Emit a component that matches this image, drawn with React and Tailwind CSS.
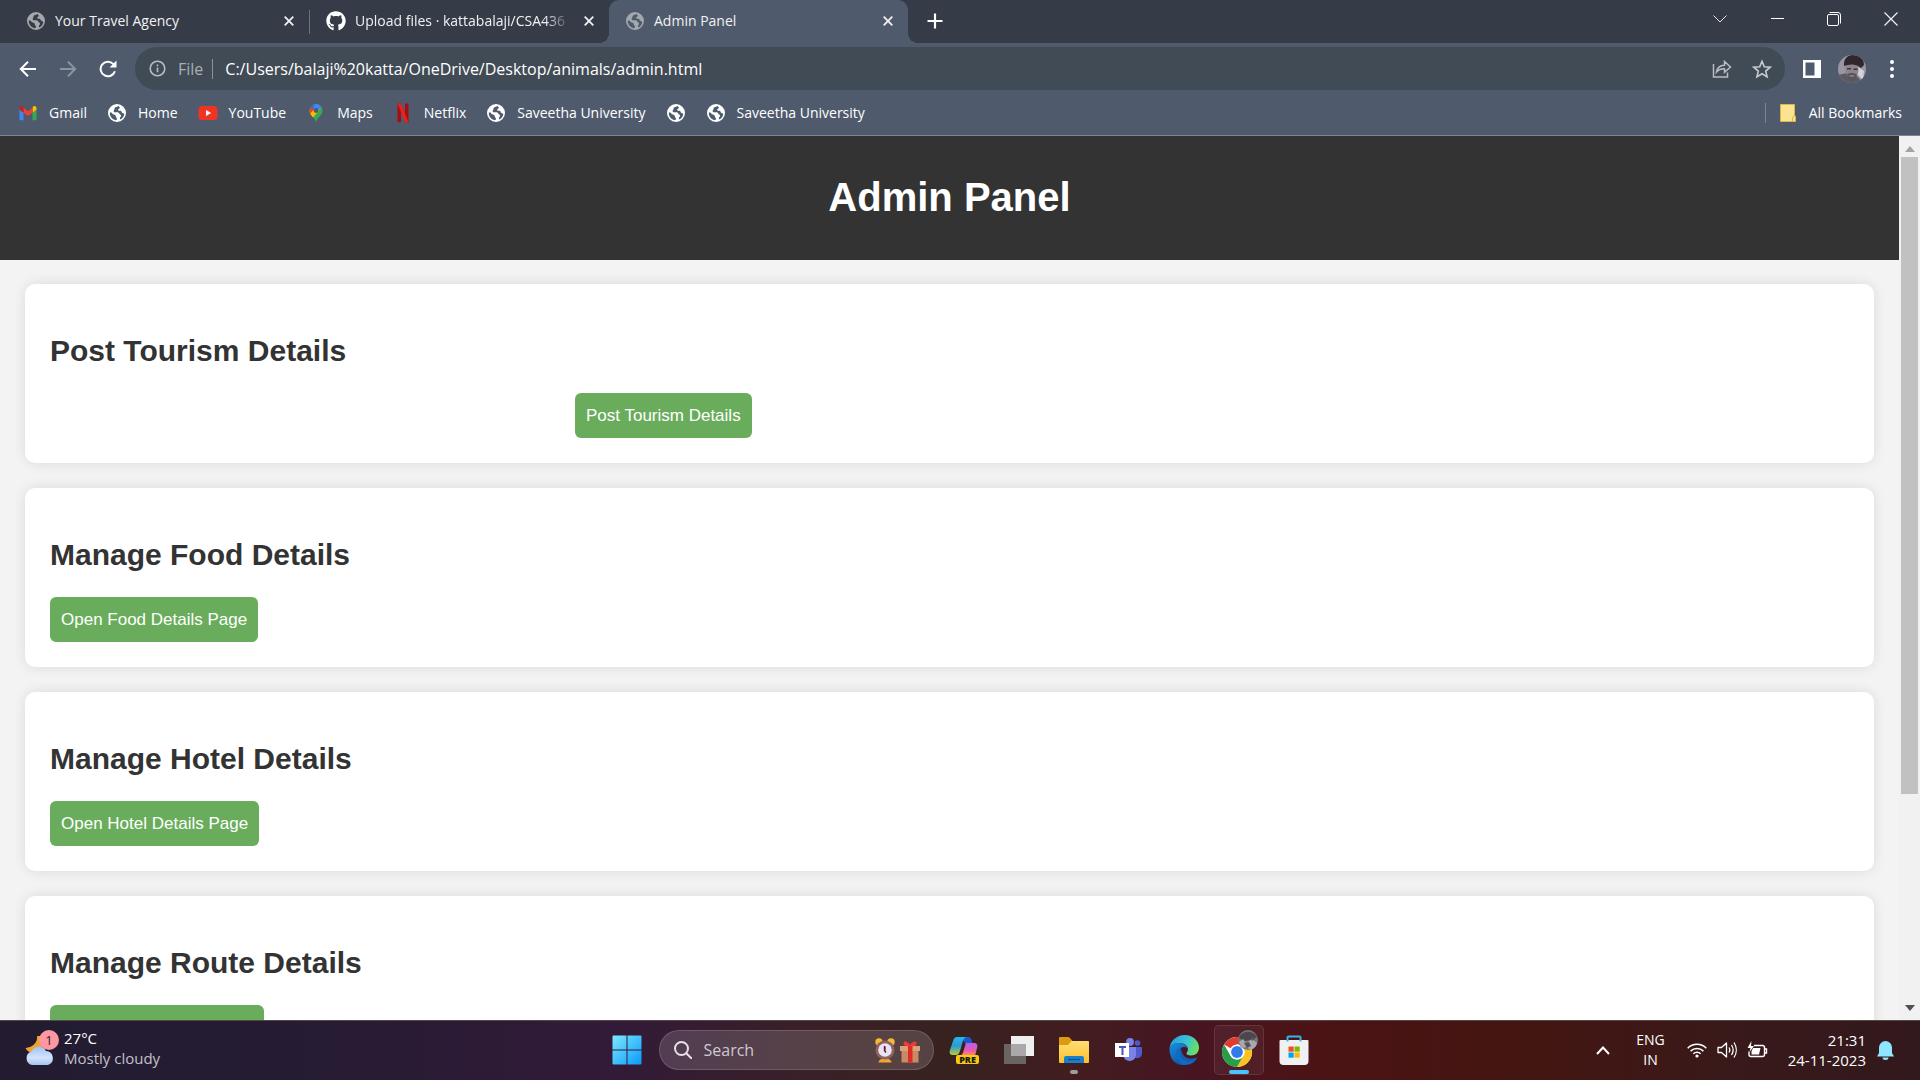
import React from "react";
import { FaGithub } from "react-icons/fa";

const uiFont = "font-['Open_Sans','Noto_Sans',sans-serif]";

function Globe({ className }) {
  return (
    <svg viewBox="0 0 20 20" className={className} fill="currentColor" aria-hidden="true">
      <path
        fillRule="evenodd"
        d="M10 1a9 9 0 1 1 0 18 9 9 0 0 1 0-18zM2.800 9.500c-.2 4 2.400 7 5.900 7.700.8-.2 1.300-.8 1.300-1.500-.2-1-1.200-1.300-1.200-2.400 0-.9-.6-1.200-1.300-1.500L5.600 11 4.500 9.500zM11.800 2.900c-1 .2-1.400.9-2.600 1.100-1.200.3-1.700 1-1.700 2 0 .8-.9 1.200-.9 2 0 .9.8 1.200 1.800 1.200h2.200c1.100 0 1.500.8 1.800 1.600.4.900 1.600.7 1.700 1.700.1 1-.9 1.500-1.200 2.600-.1.700.1 1.200.6 1.300 2-.9 3.500-3 3.800-5.300-.6-.9-1.700-.8-2.400-1.500-.6-.7-.2-1.500-1.200-1.800-1-.2-1.900.2-2.400-.6-.5-.9.700-1.400 1.300-1.900.5-.6-.2-1.600-.8-2.400z"
      />
    </svg>
  );
}

function CloseIcon() {
  return (
    <svg viewBox="0 0 10 10" className="size-[10px]" fill="none" stroke="currentColor" strokeWidth="1.8">
      <path d="M0.7 0.7l8.6 8.6M9.3 0.7L0.7 9.3" />
    </svg>
  );
}

function GmailIcon() {
  return (
    <svg viewBox="0 0 20 20" className="size-5">
      <path d="M1.5 6v10.2c0 .6.4 1 1 1h3V9.5z" fill="#4285f4" />
      <path d="M18.5 6v10.2c0 .6-.4 1-1 1h-3V9.5z" fill="#34a853" />
      <path d="M14.500 4.800v4.900l4-3V5.100c0-1.800-1.900-2.700-3.200-1.700z" fill="#fbbc04" />
      <path d="M5.500 9.700V4.800l4.500 3.400 4.500-3.400v4.900L10 13.100z" fill="#ea4335" />
      <path d="M1.500 5.100v1.600l4 3V4.800l-.8-1.400C3.400 2.400 1.500 3.300 1.500 5.100z" fill="#c5221f" />
    </svg>
  );
}

function YouTubeIcon() {
  return (
    <svg viewBox="0 0 20 20" className="size-5">
      <rect x="0.500" y="3" width="19" height="14" rx="3.500" fill="#f03424" />
      <path d="M8 7l5.200 3L8 13z" fill="#fff" />
    </svg>
  );
}

function MapsIcon() {
  return (
    <svg viewBox="0 0 20 20" className="size-5">
      <defs>
        <clipPath id="pin">
          <path d="M10 1a6.500 6.500 0 0 0-6.500 6.500c0 5 5 6.500 6.500 11.500 1.500-5 6.500-6.500 6.500-11.500A6.500 6.500 0 0 0 10 1z" />
        </clipPath>
      </defs>
      <g clipPath="url(#pin)">
        <path d="M0 0h20v20H0z" fill="#34a853" />
        <path d="M-2 14L8 2l6 4-8 10z" fill="#fbbc04" />
        <path d="M0 0h8l2 4-6 7H0z" fill="#ea4335" />
        <path d="M6 0h14v2L9 9z" fill="#4285f4" />
        <path d="M4 1h5L6 7z" fill="#1a73e8" />
      </g>
      <circle cx="10" cy="7.500" r="2.400" fill="#4f5b6d" />
    </svg>
  );
}

function NetflixIcon() {
  return (
    <svg viewBox="0 0 20 20" className="size-5">
      <path d="M4.500 0.500h3.500v18.500l-3.500 .500zM12 0.500h3.500v19l-3.500-.500z" fill="#a50d12" />
      <path d="M4.500 0.500H8l7.500 19-3.500-.500z" fill="#e8211f" />
    </svg>
  );
}

function Tab({ icon, title, active, fade }) {
  return (
    <div
      role="tab"
      aria-selected={active}
      className={
        active
          ? "relative flex h-full w-[299px] items-center rounded-t-[10px] bg-[#4f5b6d] pr-[10px] pb-0.5 pl-4"
          : "relative flex h-full w-[299px] items-center pr-[10px] pb-0.5 pl-4"
      }
    >
      {active && (
        <>
          <span className="absolute bottom-0 -left-[10px] size-[10px] bg-[radial-gradient(circle_at_0_0,#353b47_10px,#4f5b6d_10px)]" />
          <span className="absolute bottom-0 -right-[10px] size-[10px] bg-[radial-gradient(circle_at_100%_0,#353b47_10px,#4f5b6d_10px)]" />
        </>
      )}
      {icon}
      <span
        className={
          fade
            ? "ml-[9px] w-[216px] overflow-hidden whitespace-nowrap [mask-image:linear-gradient(to_right,#000_190px,transparent)]"
            : "ml-[9px] w-[216px] overflow-hidden whitespace-nowrap"
        }
      >
        {title}
      </span>
      <button aria-label={"Close " + title} className="ml-auto flex size-5 items-center justify-center">
        <CloseIcon />
      </button>
    </div>
  );
}

function TabStrip() {
  return (
    <div className="flex h-[43px] shrink-0 items-center bg-[#353b47] text-sm text-[#f0f1f3]">
      <div role="tablist" className="flex h-full items-center pl-[10px]">
        <Tab icon={<Globe className="size-5 text-[#a3a8ab]" />} title="Your Travel Agency" />
        <span className="h-6 w-px bg-[#6b7280]" />
        <Tab icon={<FaGithub className="size-5 text-white" />} title="Upload files · kattabalaji/CSA436" fade />
        <Tab icon={<Globe className="size-5 text-[#a3a8ab]" />} title="Admin Panel" active />
      </div>
      <button aria-label="New tab" className="mb-0.5 ml-[18px] flex size-[18px] items-center justify-center">
        <svg viewBox="0 0 16 16" className="size-4" stroke="#fff" strokeWidth="2.200">
          <path d="M8 0.500v15M0.500 8h15" />
        </svg>
      </button>
      <div className="ml-auto flex h-full items-center gap-[28px] pr-[15px] pb-[6px]">
        <button aria-label="Search tabs" className="flex w-[30px] justify-center">
          <svg viewBox="0 0 14 8" className="h-2 w-[14px]" fill="none" stroke="#dfe1e5">
            <path d="M0.500 0.500L7 7l6.500-6.500" />
          </svg>
        </button>
        <button aria-label="Minimize" className="flex w-[28px] justify-center">
          <span className="h-px w-[13px] bg-white" />
        </button>
        <button aria-label="Restore" className="flex w-[30px] justify-center">
          <svg viewBox="0 0 14 14" className="size-[14px]" fill="none" stroke="#fff">
            <rect x="0.500" y="2.500" width="11" height="11" rx="1.500" />
            <path d="M2.500 0.500h8.500a2.500 2.500 0 0 1 2.500 2.500v8.500" />
          </svg>
        </button>
        <button aria-label="Close window" className="flex w-[28px] justify-center">
          <svg viewBox="0 0 14 14" className="size-[14px]" fill="none" stroke="#f0f1f3" strokeWidth="1.200">
            <path d="M0.500 0.500l13 13M13.500 0.500l-13 13" />
          </svg>
        </button>
      </div>
    </div>
  );
}

function Toolbar() {
  return (
    <div className="flex h-[53px] shrink-0 items-center bg-[#4f5b6d] pt-px pr-[19px] pb-[3px] pl-[18px]">
      <button aria-label="Back" className="flex size-5 items-center justify-center">
        <svg viewBox="0 0 18 18" className="size-[18px]" fill="none" stroke="#fff" strokeWidth="2">
          <path d="M17 9H2.500M9 1.800L1.800 9 9 16.200" />
        </svg>
      </button>
      <button aria-label="Forward" className="ml-5 flex size-5 items-center justify-center">
        <svg viewBox="0 0 18 18" className="size-[18px]" fill="none" stroke="#8b939e" strokeWidth="2">
          <path d="M1 9h14.500M9 1.800L16.200 9 9 16.200" />
        </svg>
      </button>
      <button aria-label="Reload" className="ml-5 flex size-5 items-center justify-center">
        <svg viewBox="0 0 18 18" className="size-[18px]" fill="none" stroke="#fff" strokeWidth="2">
          <path d="M15.900 11.200A7.300 7.300 0 1 1 14.200 3.900L16 5.700" />
          <path d="M17.500 0.500v7h-7z" fill="#fff" stroke="none" />
        </svg>
      </button>
      <div className="ml-[17px] flex h-[43px] flex-1 items-center rounded-full bg-[#414b56] pr-[13px] pl-[14px]">
        <svg viewBox="0 0 17 17" className="size-[17px]" fill="none" stroke="#b9bdc2" strokeWidth="1.600">
          <circle cx="8.500" cy="8.500" r="7.300" />
          <path d="M8.500 7.500v4.700M8.500 4.500v1.700" />
        </svg>
        <span className="ml-3 text-base text-[#a9afb5]">File</span>
        <span className="ml-[9px] h-5 w-px bg-[#8a9198]" />
        <input
          aria-label="Address"
          defaultValue="C:/Users/balaji%20katta/OneDrive/Desktop/animals/admin.html"
          className="ml-3 flex-1 bg-transparent text-base text-white outline-none"
        />
        <button aria-label="Share" className="flex size-5 items-center justify-center">
          <svg viewBox="0 0 20 20" className="size-5" fill="none" stroke="#b9bdc2" strokeWidth="1.500">
            <path d="M1.500 5v13h14v-4.500" />
            <path d="M4.500 13c.6-4.300 3.600-6.600 8-6.800V2.500l6 5.500-6 5.400v-3.600c-3.500 0-6 .8-8 3.200z" />
          </svg>
        </button>
        <button aria-label="Bookmark this page" className="ml-5 flex size-5 items-center justify-center">
          <svg viewBox="0 0 20 20" className="size-5" fill="none" stroke="#c9cccf" strokeWidth="1.600">
            <path d="M10 2.300l2.300 5.400 5.900.5-4.500 3.900 1.400 5.800L10 14.800l-5.100 3.100 1.400-5.800-4.500-3.900 5.900-.5z" />
          </svg>
        </button>
      </div>
      <button aria-label="Side panel" className="ml-[17px] flex size-5 items-center justify-center">
        <svg viewBox="0 0 18 18" className="size-[18px]">
          <path fillRule="evenodd" fill="#fff" d="M0 0h18v18H0zM2.500 2.500v13H11.500v-13z" />
        </svg>
      </button>
      <button aria-label="Profile" className="ml-4">
        <svg viewBox="0 0 28 28" className="size-7">
          <clipPath id="avatar"><circle cx="14" cy="14" r="14" /></clipPath>
          <g clipPath="url(#avatar)">
            <path d="M0 0h28v28H0z" fill="#9a95a3" />
            <path d="M0 20l9-2 9 2 7 8H0z" fill="#5c5b64" />
            <path d="M20 12l6 4-1 9-6-6z" fill="#d5d2dc" />
            <ellipse cx="14" cy="15" rx="6.500" ry="9" fill="#8b848b" />
            <path d="M6 11C5.500 4 9 0 15 0c6 0 11 3 11 10l-3 3-3-2C16 9 11 9 6 11z" fill="#2f272c" />
            <path d="M9 13h4v1.500H9zM15.500 13.500h4V15h-4z" fill="#3d363b" />
            <path d="M9 19.500c3-2 7.500-2 10 .5l-2 4.500-4 2-3-3z" fill="#5b545a" />
            <path d="M11.500 20.500h4.500v1h-4.500z" fill="#a59da4" />
          </g>
        </svg>
      </button>
      <button aria-label="Menu" className="ml-[17px] flex w-[18px] justify-center">
        <svg viewBox="0 0 4 18" className="h-[18px] w-1" fill="#fff">
          <circle cx="2" cy="2" r="2" />
          <circle cx="2" cy="9" r="2" />
          <circle cx="2" cy="16" r="2" />
        </svg>
      </button>
    </div>
  );
}

const bookmarks = [
  { label: "Gmail", icon: <GmailIcon /> },
  { label: "Home", icon: <Globe className="size-5" /> },
  { label: "YouTube", icon: <YouTubeIcon /> },
  { label: "Maps", icon: <MapsIcon /> },
  { label: "Netflix", icon: <NetflixIcon /> },
  { label: "Saveetha University", icon: <Globe className="size-5" /> },
  { label: "", icon: <Globe className="size-5" /> },
  { label: "Saveetha University", icon: <Globe className="size-5" /> },
];

function BookmarksBar() {
  return (
    <nav className="flex h-10 shrink-0 items-center border-b border-[#7b8592] bg-[#4f5b6d] pr-[18px] pb-[6px] pl-[18px] text-sm text-white">
      <div className="flex items-center gap-5">
        {bookmarks.map((b, i) => (
          <a key={i} href="#" aria-label={b.label || "Bookmark"} className="flex items-center gap-[11px]">
            {b.icon}
            {b.label && <span>{b.label}</span>}
          </a>
        ))}
      </div>
      <span className="ml-auto h-5 w-px bg-[#7b8592]" />
      <a href="#" className="ml-[14px] flex items-center gap-[13px]">
        <svg viewBox="0 0 16 18" className="h-[18px] w-4">
          <path d="M0.500 0.500h14v11.500h1v5.500h-15z" fill="#fbe491" stroke="#d9b84a" />
          <path d="M12.500 17.500v-4l2-1.500" fill="none" stroke="#d9b84a" />
        </svg>
        <span>All Bookmarks</span>
      </a>
    </nav>
  );
}

function Card({ title, action, label, actionClass }) {
  return (
    <section className="rounded-[10px] bg-white p-[25px] shadow-[0_0_13px_rgba(0,0,0,0.1)]">
      <h2 className="my-[25px] text-[30px] leading-[34px] font-bold text-[#333]">{title}</h2>
      <button
        aria-label={label}
        className={"block h-[45px] rounded-[6px] bg-[#69ad5c] px-[11px] text-[17px] text-white " + actionClass}
      >
        {action}
      </button>
    </section>
  );
}

function AdminPage() {
  return (
    <div className="flex min-h-0 flex-1">
      <main className="flex-1 overflow-hidden bg-[#f3f3f3] font-['Liberation_Sans',Arial,sans-serif]">
        <header className="bg-[#333] px-3 pt-[38px] pb-[40px] text-center">
          <h1 className="text-[40px] leading-[46px] font-bold text-white">Admin Panel</h1>
        </header>
        <div className="flex flex-col gap-[25px] px-[25px] py-6">
          <Card title="Post Tourism Details" action="Post Tourism Details" actionClass="ml-[525px]" />
          <Card title="Manage Food Details" action="Open Food Details Page" actionClass="" />
          <Card title="Manage Hotel Details" action="Open Hotel Details Page" actionClass="" />
          <Card title="Manage Route Details" label="Manage Route Details" actionClass="w-[214px]" />
        </div>
      </main>
      <div className="flex w-[21px] shrink-0 flex-col items-center bg-[#f1f1f1]" aria-hidden="true">
        <span className="flex h-[21px] items-center pt-1">
          <svg viewBox="0 0 10 6" className="h-[6px] w-[10px]" fill="#a3a3a3"><path d="M0 6l5-6 5 6z" /></svg>
        </span>
        <span className="h-[637px] w-[17px] bg-[#c1c1c1]" />
        <span className="mt-auto flex h-6 items-center">
          <svg viewBox="0 0 10 6" className="h-[6px] w-[10px]" fill="#505050"><path d="M0 0l5 6 5-6z" /></svg>
        </span>
      </div>
    </div>
  );
}

function WeatherIcon() {
  return (
    <svg viewBox="0 0 36 38" className="h-[38px] w-9">
      <defs>
        <linearGradient id="cloud" x1="0" y1="0" x2="0" y2="1">
          <stop offset="0" stopColor="#9cc3f5" />
          <stop offset="0.600" stopColor="#d4e3fb" />
          <stop offset="1" stopColor="#a5c1f0" />
        </linearGradient>
      </defs>
      <path d="M13 7c1 6-4 11.500-11.500 12 2 4 6 6 12 4l6-8-3-8z" fill="#f2a32c" />
      <path d="M8 36a7 7 0 0 1-.5-13.500 8 8 0 0 1 14.500-.5A7.200 7.200 0 0 1 24 36z" fill="url(#cloud)" />
      <circle cx="25" cy="11" r="10" fill="#fd98a3" />
      <text x="25" y="16" textAnchor="middle" fontSize="13" fill="#2b2030" fontFamily="Open Sans">1</text>
    </svg>
  );
}

function StartIcon() {
  return (
    <svg viewBox="0 0 30 30" className="size-[30px]">
      <defs>
        <linearGradient id="win" x1="0" y1="0" x2="1" y2="1">
          <stop offset="0" stopColor="#7beafe" />
          <stop offset="1" stopColor="#0a98fb" />
        </linearGradient>
      </defs>
      <path d="M1.500 0.500H14.500V14.500H0.500V1.500q0-1 1-1zM15.500 0.500H28.500q1 0 1 1V14.500H15.500zM0.500 15.500H14.500V29.500H1.500q-1 0-1-1zM15.500 15.500H29.500V28.500q0 1-1 1H15.500z" fill="url(#win)" />
    </svg>
  );
}

function ClockIcon() {
  return (
    <svg viewBox="0 0 20 25" className="h-[25px] w-5">
      <path d="M3.500 24.500c0-2.500 3-4 6.500-4s6.500 1.500 6.500 4z" fill="#f3a42b" />
      <circle cx="4" cy="4" r="3.700" fill="#f7b932" />
      <circle cx="16" cy="4" r="3.700" fill="#f7b932" />
      <circle cx="10" cy="12" r="9.500" fill="#8d6260" />
      <circle cx="10" cy="12" r="6.800" fill="#e9e3f4" />
      <path d="M9.500 8v4.500l1.500 2" stroke="#35304a" strokeWidth="1.400" fill="none" />
      <path d="M10.500 8.500v4" stroke="#e2354a" strokeWidth="1" />
    </svg>
  );
}

function GiftIcon() {
  return (
    <svg viewBox="0 0 20 22" className="h-[22px] w-5">
      <path d="M1.500 9h17v12.500h-17z" fill="#c98b65" />
      <path d="M0 5h20v5H0z" fill="#dda179" />
      <path d="M8 5h4.500v16.500H8z" fill="#e02a2a" />
      <path d="M10 5C6 6 3 4.500 3.500 2S8.500.500 10 4c1.500-3.500 6.500-4.500 6.500-2S14 6 10 5z" fill="#ef3a35" />
    </svg>
  );
}

function CopilotIcon() {
  return (
    <svg viewBox="0 0 30 30" className="size-[30px]">
      <defs>
        <linearGradient id="copA" x1="0" y1="0" x2="0" y2="1">
          <stop offset="0" stopColor="#24b6f0" />
          <stop offset="0.500" stopColor="#2f9bd3" />
          <stop offset="1" stopColor="#b5cf38" />
        </linearGradient>
        <linearGradient id="copB" x1="0" y1="0" x2="0" y2="1">
          <stop offset="0" stopColor="#b45cf0" />
          <stop offset="0.600" stopColor="#ec5ba8" />
          <stop offset="1" stopColor="#f59a5b" />
        </linearGradient>
      </defs>
      <path d="M12 2h7c2 0 3 1 3.500 3l1.500 5h-7z" fill="#1d58c9" />
      <path d="M8 2h9c-2 1-3 3-4 7l-2 7c-1 2.500-2 4-4 4H4c-3 0-4-2-3-5l3-9c.8-2.500 2-4 4-4z" fill="url(#copA)" />
      <path d="M17 8h8c3 0 4 2 3 5l-2 8H11c2-1 3-3 3.500-5z" fill="url(#copB)" />
      <rect x="7" y="20" width="23" height="9" rx="2" fill="#fdc90c" />
      <text x="18.500" y="28" textAnchor="middle" fontSize="9" fontWeight="800" fill="#1b1b1b" fontFamily="Open Sans">PRE</text>
    </svg>
  );
}

function TaskViewIcon() {
  return (
    <svg viewBox="0 0 30 28" className="h-7 w-[30px]">
      <path d="M7 0h23v20H7z" fill="#efefef" />
      <path d="M0 8h22v20H0z" fill="#6f6b6a" fillOpacity="0.900" />
      <path d="M7 8h15v12H7z" fill="#aaa8a8" />
    </svg>
  );
}

function FolderIcon() {
  return (
    <svg viewBox="0 0 30 28" className="h-7 w-[30px]">
      <defs>
        <linearGradient id="fold" x1="0" y1="0" x2="0" y2="1">
          <stop offset="0" stopColor="#ffdf75" />
          <stop offset="1" stopColor="#fcbf2b" />
        </linearGradient>
      </defs>
      <path d="M0 2q0-1 1-1h8q1 0 2 1l2.500 3H28q2 0 2 2v8H0z" fill="#dd9a10" />
      <path d="M0 9h9l3.500-4H29q1 0 1 1v20q0 1-1 1H1q-1 0-1-1z" fill="url(#fold)" />
      <path d="M5 27v-5q0-2 2-2h16q2 0 2 2v5z" fill="#1a7fc9" />
      <path d="M9 23.500h12" stroke="#0e4f8a" strokeWidth="1.200" />
    </svg>
  );
}

function TeamsIcon() {
  return (
    <svg viewBox="0 0 27 24" className="h-6 w-[27px]">
      <circle cx="22.500" cy="5" r="2.800" fill="#5059c9" />
      <circle cx="15" cy="4" r="3.900" fill="#7b83eb" />
      <path d="M18 9h8q1 0 1 1v6a5 5 0 0 1-9 2z" fill="#5059c9" />
      <path d="M9 9h12v8a6.500 6.500 0 0 1-12 3z" fill="#7b83eb" />
      <path d="M0 5h14v14H0z" fill="#fff" />
      <path d="M4 8h7v2H8.500v7h-2v-7H4z" fill="#4b53bc" />
    </svg>
  );
}

function EdgeIcon() {
  return (
    <svg viewBox="0 0 30 30" className="size-[30px]">
      <defs>
        <linearGradient id="edgeTop" x1="0" y1="0.300" x2="1" y2="0.600">
          <stop offset="0" stopColor="#2a9fe0" />
          <stop offset="0.500" stopColor="#35c1d8" />
          <stop offset="1" stopColor="#6ee25c" />
        </linearGradient>
        <linearGradient id="edgeMid" x1="0" y1="0" x2="0.500" y2="1">
          <stop offset="0" stopColor="#1b8fe0" />
          <stop offset="1" stopColor="#0c59a4" />
        </linearGradient>
      </defs>
      <path d="M0.500 13C1.500 5.500 8 0 15.500 0 24 0 30 6 30 12.500c0 5-3.500 8-8 8-3 0-5-1-4.500-2.500.3-1 1.500-1.500 1.500-4 0-3-3.500-6-9-6-4.500 0-8 2-9.500 5z" fill="url(#edgeTop)" />
      <path d="M0.500 13C2 9.500 6 7.500 10 8c5 .5 8.500 3 9 6-1-1.500-2.500-2-4-2-3 0-5 2.500-5 6 0 5 4 9.500 10 9.500-2 1.500-3 2.500-6.500 2.500C5 30 0 22 .5 13z" fill="url(#edgeMid)" />
      <path d="M11 15c-2 7 3 12 10 11.500 3-.2 6-2 7-3.500.3-.5 0-.8-.5-.5-5 2.500-14 1.500-15-7.500z" fill="#1b5aae" />
      <path d="M7 18c0 7 5 11.500 8.500 12C22 30 26 27 28 23c-5 4.500-17 5.500-17-6 0-2 1-4 2.500-5C10 12 7 14.500 7 18z" fill="#0e6cc2" />
    </svg>
  );
}

function ChromeIcon() {
  return (
    <svg viewBox="0 0 40 40" className="size-10">
      <circle cx="18" cy="22" r="15" fill="#fff" />
      <path d="M18 22L5 14.500A15 15 0 0 1 31 14.500H18z" fill="#e33b2e" />
      <path d="M31 14.500A15 15 0 0 1 18 37l6.500-11.250A7.500 7.500 0 0 0 18 14.500z" fill="#fcc31e" />
      <path d="M5 14.500A15 15 0 0 0 18 37l6.500-11.250A7.500 7.500 0 0 1 11.500 25.750z" fill="#2a9d48" />
      <circle cx="18" cy="22" r="7.500" fill="#fff" />
      <circle cx="18" cy="22" r="5.900" fill="#2f7bea" />
      <circle cx="29" cy="10" r="10" fill="#77757b" />
      <path d="M20 8c2-7 13-9 18-1l-5 3-8 1z" fill="#4a484d" />
      <path d="M20 12l4-3 3 4 6-4 5 4a10 10 0 0 1-6 7l-5-3-4 1z" fill="#a9a7ab" />
      <path d="M25 13l5-1 2 4-4 2zM32 6l4 3-3 2z" fill="#555358" />
    </svg>
  );
}

function StoreIcon() {
  return (
    <svg viewBox="0 0 30 30" className="size-[30px]">
      <path d="M1.500 5h27q1 0 1 1v20q0 4-4 4h-21q-4 0-4-4V6q0-1 1-1z" fill="#f0f0f2" />
      <path d="M8.500 6.500V2.500q0-1 1-1h11q1 0 1 1v4" fill="none" stroke="#32b4f0" strokeWidth="2" />
      <path d="M9.500 11.500h5.200v5.200H9.500z" fill="#f25022" />
      <path d="M15.500 11.500h5.200v5.200h-5.200z" fill="#7fba00" />
      <path d="M9.500 17.500h5.200v5.200H9.500z" fill="#00a4ef" />
      <path d="M15.500 17.500h5.200v5.200h-5.200z" fill="#ffb900" />
    </svg>
  );
}

const apps = [
  { label: "Copilot", icon: <CopilotIcon /> },
  { label: "Task view", icon: <TaskViewIcon /> },
  { label: "File Explorer", icon: <FolderIcon />, open: true },
  { label: "Teams", icon: <TeamsIcon /> },
  { label: "Edge", icon: <EdgeIcon /> },
  { label: "Chrome", icon: <ChromeIcon />, active: true },
  { label: "Microsoft Store", icon: <StoreIcon /> },
];

function Taskbar() {
  return (
    <footer className="grid h-[60px] shrink-0 grid-cols-[1fr_auto_1fr] items-center bg-[linear-gradient(to_right,#231c31_0%,#251c33_15%,#321a38_32%,#3a2028_42%,#38221f_50%,#431c20_57%,#471522_62%,#4b1314_69%,#431611_80%,#39191a_90%,#32191d_100%)] shadow-[inset_0_1px_#55474a]">
      <button className="mb-1 ml-6 flex items-center gap-1 justify-self-start text-left text-[15px] leading-5 text-white">
        <WeatherIcon />
        <span className="flex flex-col">
          <span>27°C</span>
          <span className="text-[#c4c0c9]">Mostly cloudy</span>
        </span>
      </button>
      <div className="flex items-center">
        <button aria-label="Start" className="flex size-[50px] items-center justify-center">
          <StartIcon />
        </button>
        <label className="mr-[5px] ml-[7px] flex h-10 w-[275px] items-center rounded-full border border-white/15 bg-white/15 pr-[13px] pl-[14px]">
          <svg viewBox="0 0 18 18" className="size-[18px] shrink-0" fill="none" stroke="#e6e1e6" strokeWidth="2">
            <circle cx="7.500" cy="7.500" r="6.500" />
            <path d="M12.300 12.300l5 5" strokeLinecap="round" />
          </svg>
          <input
            aria-label="Search"
            placeholder="Search"
            className="ml-3 w-0 flex-1 bg-transparent text-base text-white outline-none placeholder:text-[#cfc8ce]"
          />
          <ClockIcon />
          <span className="ml-[5px] flex pt-1">
            <GiftIcon />
          </span>
        </label>
        <div className="flex gap-[5px]">
          {apps.map((a) => (
            <button
              key={a.label}
              aria-label={a.label}
              className={
                a.active
                  ? "relative flex size-[50px] items-center justify-center rounded-[5px] border border-white/10 bg-white/5"
                  : "relative flex size-[50px] items-center justify-center"
              }
            >
              {a.icon}
              {a.open && <span className="absolute bottom-px h-1 w-2 rounded-full bg-[#a29a9b]" />}
              {a.active && <span className="absolute bottom-0 h-1 w-5 rounded-full bg-[#4cc2ff]" />}
            </button>
          ))}
        </div>
      </div>
      <div className="flex items-center justify-self-end pr-[26px] text-sm leading-5 text-white">
        <button aria-label="Show hidden icons">
          <svg viewBox="0 0 14 9" className="h-[9px] w-[14px]" fill="none" stroke="#fff" strokeWidth="2">
            <path d="M1 8l6-6.500L13 8" />
          </svg>
        </button>
        <button className="ml-[26px] flex flex-col items-center">
          <span>ENG</span>
          <span>IN</span>
        </button>
        <button aria-label="Network, volume and battery" className="ml-[22px] flex items-center gap-[10px]">
          <svg viewBox="0 0 20 16" className="h-4 w-5" fill="none" stroke="#fff" strokeWidth="1.500">
            <path d="M0.700 6.200a13 13 0 0 1 18.600 0M3.600 9.100a9 9 0 0 1 12.800 0M6.300 11.800a5.200 5.200 0 0 1 7.400 0" />
            <circle cx="10" cy="14" r="1.600" fill="#fff" stroke="none" />
          </svg>
          <svg viewBox="0 0 20 18" className="h-[18px] w-5" fill="none" stroke="#fff" strokeWidth="1.300">
            <path d="M1 6.500h3.500L9.500 2v14l-5-4.500H1z" strokeLinejoin="round" />
            <path d="M12 6.500c1 1.500 1 3.500 0 5M14.500 4c2 3 2 7 0 10M17 1.500c3 4.500 3 10.500 0 15" />
          </svg>
          <svg viewBox="0 0 21 18" className="h-[18px] w-[21px]" fill="none" stroke="#fff" strokeWidth="1.400">
            <path d="M7 4.500h8.500a2 2 0 0 1 2 2v7a2 2 0 0 1-2 2H4a2 2 0 0 1-2-2v-3" />
            <path d="M18 8h1.500v4H18" />
            <path d="M6 7h7.500L12 13.500H4.500v-3z" fill="#fff" stroke="none" />
            <path d="M4.500 0L0.500 7h3L2.500 11 7 5H4z" fill="#fff" stroke="none" />
          </svg>
        </button>
        <button className="ml-5 flex flex-col items-end text-[15px] leading-5">
          <span>21:31</span>
          <span>24-11-2023</span>
        </button>
        <button aria-label="Notifications" className="ml-[11px]">
          <svg viewBox="0 0 17 19" className="h-[19px] w-[17px]" fill="#8ee6ff">
            <path d="M8.500 0a6.500 6.500 0 0 1 6.500 6.500v5.500l2 3.500H0L2 12V6.500A6.500 6.500 0 0 1 8.500 0zM5.500 16.500h6a3 2.500 0 0 1-6 0z" />
          </svg>
        </button>
      </div>
    </footer>
  );
}

export default function App() {
  return (
    <div className={"flex h-screen flex-col overflow-hidden " + uiFont}>
      <TabStrip />
      <Toolbar />
      <BookmarksBar />
      <AdminPage />
      <Taskbar />
    </div>
  );
}
